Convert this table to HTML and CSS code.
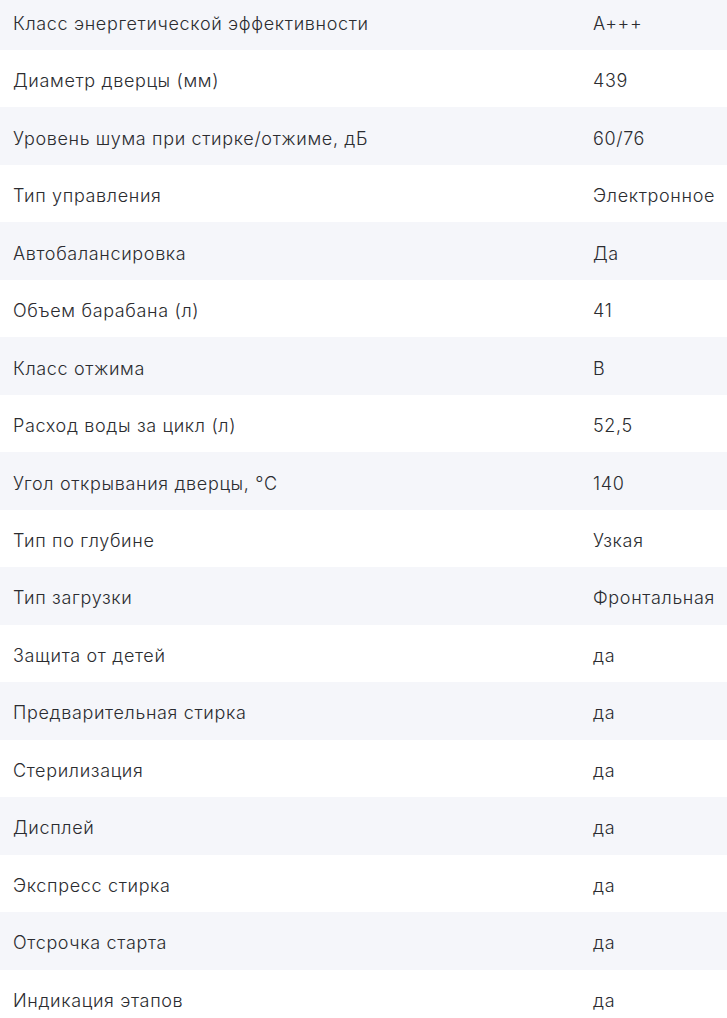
FILE: index.html
```html
<!DOCTYPE html>
<html lang="ru">
<head>
<meta charset="utf-8">
<link rel="stylesheet" href="styles.css">
</head>
<body>
<div class="specs">
  <div class="row"><div class="name">Класс энергетической эффективности</div><div class="val">A+++</div></div>
  <div class="row"><div class="name">Диаметр дверцы (мм)</div><div class="val">439</div></div>
  <div class="row"><div class="name">Уровень шума при стирке/отжиме, дБ</div><div class="val">60/76</div></div>
  <div class="row"><div class="name">Тип управления</div><div class="val">Электронное</div></div>
  <div class="row"><div class="name">Автобалансировка</div><div class="val">Да</div></div>
  <div class="row"><div class="name">Объем барабана (л)</div><div class="val">41</div></div>
  <div class="row"><div class="name">Класс отжима</div><div class="val">B</div></div>
  <div class="row"><div class="name">Расход воды за цикл (л)</div><div class="val">52,5</div></div>
  <div class="row"><div class="name">Угол открывания дверцы, °C</div><div class="val">140</div></div>
  <div class="row"><div class="name">Тип по глубине</div><div class="val">Узкая</div></div>
  <div class="row"><div class="name">Тип загрузки</div><div class="val">Фронтальная</div></div>
  <div class="row"><div class="name">Защита от детей</div><div class="val">да</div></div>
  <div class="row"><div class="name">Предварительная стирка</div><div class="val">да</div></div>
  <div class="row"><div class="name">Стерилизация</div><div class="val">да</div></div>
  <div class="row"><div class="name">Дисплей</div><div class="val">да</div></div>
  <div class="row"><div class="name">Экспресс стирка</div><div class="val">да</div></div>
  <div class="row"><div class="name">Отсрочка старта</div><div class="val">да</div></div>
  <div class="row"><div class="name">Индикация этапов</div><div class="val">да</div></div>
</div>
</body>
</html>
```

FILE: styles.css
```css
html, body {
  margin: 0;
  padding: 0;
  background: #ffffff;
}
body {
  font-family: "Inter", "Noto Sans", sans-serif;
  font-size: 18px;
  font-weight: 300;
  letter-spacing: 0.65px;
  color: #2b2c30;
  overflow: hidden;
}
.specs {
  margin-top: -7.47px;
}
.row {
  display: grid;
  grid-template-columns: 580px 1fr;
  height: 57.47px;
  align-items: center;
}
.row:nth-child(odd) {
  background: #f5f6fa;
}
.name, .val {
  padding-left: 13px;
  padding-top: 4px;
  white-space: nowrap;
}
```
